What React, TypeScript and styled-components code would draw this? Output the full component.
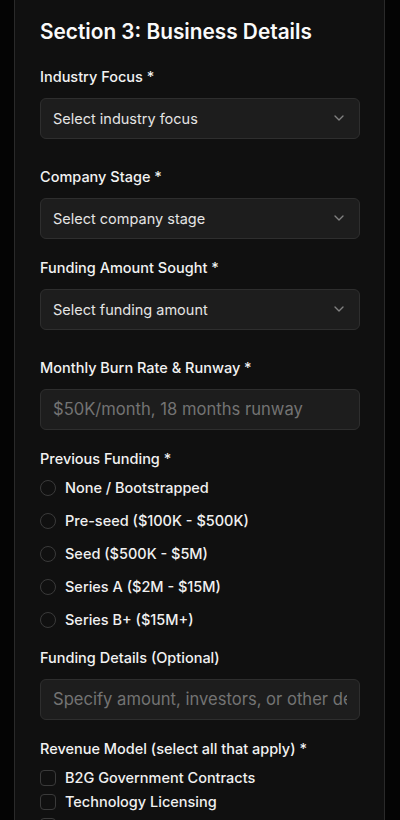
import React from 'react';
import styled, { createGlobalStyle } from 'styled-components';
import { ChevronDown } from 'lucide-react';

const GlobalStyle = createGlobalStyle`
  html, body {
    margin: 0;
    padding: 0;
    background: #040404;
    font-family: Inter, "Noto Sans", "Liberation Sans", sans-serif;
    color: #f5f5f5;
    -webkit-font-smoothing: antialiased;
  }
  * { box-sizing: border-box; }
`;

const Page = styled.div`
  height: 820px;
  padding: 0 15px 0 14px;
  overflow: hidden;
`;

const Card = styled.section`
  background: #101010;
  border-left: 1px solid #2a2a2a;
  border-right: 1px solid #2a2a2a;
  padding: 18px 24px 40px 25px;
  display: flex;
  flex-direction: column;
  min-height: 820px;
`;

const Title = styled.h2`
  margin: 0;
  font-size: 20.8px;
  line-height: 28px;
  font-weight: 600;
  color: #fafafa;
`;

const Field = styled.div<{ $top: number }>`
  display: flex;
  flex-direction: column;
  margin-top: ${(p) => p.$top}px;
`;

const Label = styled.label<{ $gap?: number }>`
  font-size: 14.5px;
  line-height: 20px;
  font-weight: 500;
  color: #f2f2f2;
  margin-bottom: ${(p) => p.$gap ?? 11}px;
`;

const SelectBox = styled.button`
  display: flex;
  align-items: center;
  justify-content: space-between;
  height: 41px;
  width: 100%;
  padding: 0 12px;
  background: #1d1d1d;
  border: 1px solid #2e2e2e;
  border-radius: 6px;
  color: #e4e4e4;
  font-family: inherit;
  font-size: 14.5px;
  text-align: left;
  svg {
    opacity: 0.5;
    flex-shrink: 0;
  }
`;

const TextInput = styled.input`
  height: 41px;
  width: 100%;
  padding: 0 12px;
  background: #1d1d1d;
  border: 1px solid #2e2e2e;
  border-radius: 6px;
  color: #e4e4e4;
  font-family: inherit;
  font-size: 16.6px;
  outline: none;
  &::placeholder {
    color: #737373;
  }
`;

const OptionList = styled.div<{ $gap: number }>`
  display: flex;
  flex-direction: column;
  gap: ${(p) => p.$gap}px;
`;

const OptionRow = styled.label`
  display: flex;
  align-items: center;
  gap: 9px;
  height: 20px;
  font-size: 14.5px;
  font-weight: 500;
  color: #f0f0f0;
`;

const Radio = styled.span`
  width: 16px;
  height: 16px;
  border-radius: 50%;
  border: 1px solid #3a3a3a;
  flex-shrink: 0;
`;

const Checkbox = styled.span`
  width: 16px;
  height: 16px;
  border-radius: 4px;
  border: 1px solid #3a3a3a;
  flex-shrink: 0;
`;

const Select: React.FC<{ placeholder: string }> = ({ placeholder }) => (
  <SelectBox type="button">
    <span>{placeholder}</span>
    <ChevronDown size={16} strokeWidth={2} />
  </SelectBox>
);

const fundingOptions = [
  'None / Bootstrapped',
  'Pre-seed ($100K - $500K)',
  'Seed ($500K - $5M)',
  'Series A ($2M - $15M)',
  'Series B+ ($15M+)',
];

const revenueOptions = [
  'B2G Government Contracts',
  'Technology Licensing',
  'SaaS Subscriptions',
];

export default function App() {
  return (
    <>
      <GlobalStyle />
      <Page>
        <Card>
          <Title>Section 3: Business Details</Title>

          <Field $top={20.5}>
            <Label>Industry Focus *</Label>
            <Select placeholder="Select industry focus" />
          </Field>

          <Field $top={28}>
            <Label>Company Stage *</Label>
            <Select placeholder="Select company stage" />
          </Field>

          <Field $top={19}>
            <Label>Funding Amount Sought *</Label>
            <Select placeholder="Select funding amount" />
          </Field>

          <Field $top={28}>
            <Label>Monthly Burn Rate &amp; Runway *</Label>
            <TextInput placeholder="$50K/month, 18 months runway" />
          </Field>

          <Field $top={19}>
            <Label $gap={9}>Previous Funding *</Label>
            <OptionList $gap={13}>
              {fundingOptions.map((o) => (
                <OptionRow key={o}>
                  <Radio />
                  {o}
                </OptionRow>
              ))}
            </OptionList>
          </Field>

          <Field $top={18}>
            <Label>Funding Details (Optional)</Label>
            <TextInput placeholder="Specify amount, investors, or other details" />
          </Field>

          <Field $top={19}>
            <Label $gap={9}>Revenue Model (select all that apply) *</Label>
            <OptionList $gap={4.4}>
              {revenueOptions.map((o) => (
                <OptionRow key={o}>
                  <Checkbox />
                  {o}
                </OptionRow>
              ))}
            </OptionList>
          </Field>
        </Card>
      </Page>
    </>
  );
}
